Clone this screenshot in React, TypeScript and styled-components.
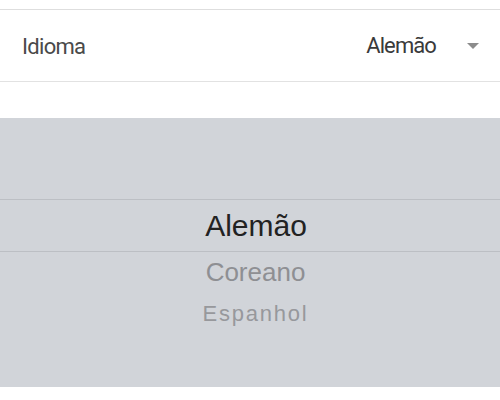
import styled, { createGlobalStyle } from "styled-components";

const GlobalStyle = createGlobalStyle`
  html, body {
    margin: 0;
    padding: 0;
    background: #ffffff;
  }
  body {
    font-family: Roboto, "Liberation Sans", sans-serif;
  }
`;

const Page = styled.div`
  width: 500px;
  height: 400px;
  padding-top: 9px;
  box-sizing: border-box;
  overflow: hidden;
  background: #ffffff;
`;

// ---------------- Select row ----------------
const SettingRow = styled.div`
  height: 71px;
  display: flex;
  align-items: center;
  justify-content: space-between;
  padding: 0 21px 0 22px;
  border-top: 1px solid #dedede;
  border-bottom: 1px solid #e2e2e2;
`;

const Label = styled.span`
  font-size: 22px;
  color: #4a4a4a;
  letter-spacing: -0.7px;
  margin-top: 1px;
`;

const Value = styled.div`
  display: flex;
  align-items: center;
  gap: 31px;
  font-size: 22px;
  color: #3a3a3a;
  letter-spacing: -0.9px;
`;

const Caret = styled.span`
  width: 0;
  height: 0;
  border-left: 6.5px solid transparent;
  border-right: 6.5px solid transparent;
  border-top: 6px solid #8c8c8c;
  margin-top: 1px;
`;

const Spacer = styled.div`
  height: 36px;
`;

// ---------------- Wheel picker ----------------
const Picker = styled.div`
  height: 269px;
  background: #d1d4d9;
  padding-top: 81px;
  box-sizing: border-box;
  font-family: "Liberation Sans", Arial, sans-serif;
`;

const Selected = styled.div`
  height: 51px;
  display: flex;
  align-items: center;
  justify-content: center;
  padding-left: 12px;
  border-top: 1px solid #bcbfc4;
  border-bottom: 1px solid #bcbfc4;
  font-size: 30px;
  color: #222222;
`;

const Option = styled.div<{ $size: number; $color: string; $spacing: number }>`
  height: 41px;
  display: flex;
  align-items: center;
  justify-content: center;
  padding-left: 11px;
  font-size: ${({ $size }) => $size}px;
  color: ${({ $color }) => $color};
  letter-spacing: ${({ $spacing }) => $spacing}px;
`;

const options = [
  { label: "Coreano", size: 26, color: "#8e8f93", spacing: 0 },
  { label: "Espanhol", size: 22, color: "#97989c", spacing: 1.8 },
];

export default function App() {
  return (
    <>
      <GlobalStyle />
      <Page>
        <SettingRow>
          <Label>Idioma</Label>
          <Value>
            Alemão
            <Caret />
          </Value>
        </SettingRow>
        <Spacer />
        <Picker>
          <Selected>Alemão</Selected>
          {options.map((o) => (
            <Option key={o.label} $size={o.size} $color={o.color} $spacing={o.spacing}>
              {o.label}
            </Option>
          ))}
        </Picker>
      </Page>
    </>
  );
}
